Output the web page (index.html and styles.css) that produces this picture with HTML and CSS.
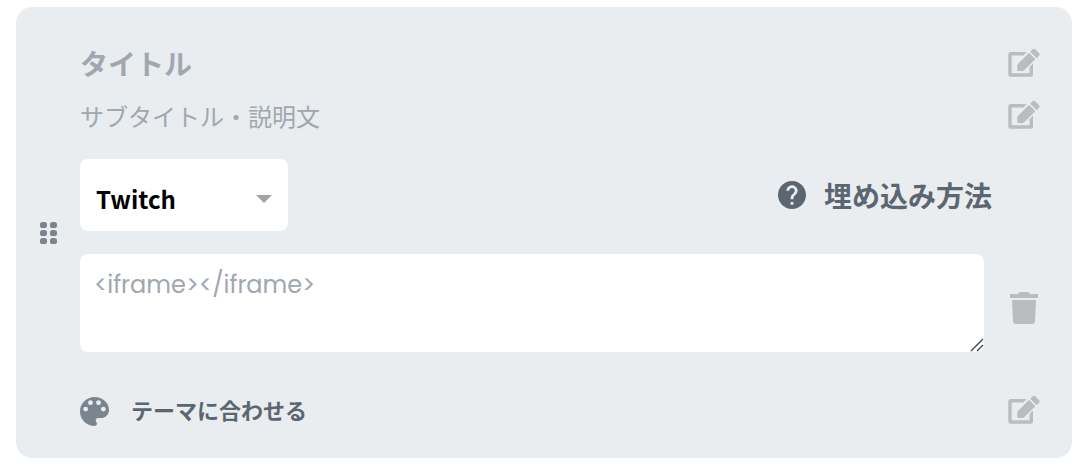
FILE: index.html
```html
<!DOCTYPE html>
<html lang="ja">

<head>
  <meta charset="UTF-8">
  <meta name="viewport" content="width=device-width, initial-scale=1.0">
  <title>埋め込み</title>
  <link rel="stylesheet" href="styles.css">
</head>

<body>
  <svg class="sprite" aria-hidden="true">
    <symbol id="icon-edit" viewBox="0 0 32 32">
      <path d="M18.7 4H2.8A2.5 2.5 0 0 0 .3 6.5v19.7a2.5 2.5 0 0 0 2.5 2.5h19.7a2.5 2.5 0 0 0 2.5-2.5V15.5l-3.4 3.4v5.7a.7.7 0 0 1-.7.7H4.4a.7.7 0 0 1-.7-.7V8.1a.7.7 0 0 1 .7-.7h10.9z" />
      <path d="M20.4 5.4q.7-.7 1.4 0l5 5q.7.7 0 1.4L16.2 22.3q-.6.6-1.5.6H10.300q-1 0-1-1v-4.400q0-.8.6-1.400zM22.7 3.300l1.700-1.700a2.200 2.200 0 0 1 3.100 0l3.400 3.400a2.200 2.200 0 0 1 0 3.100l-1.700 1.700q-.5.5-1 0l-5.500-5.500q-.5-.5 0-1z" />
    </symbol>
  </svg>

  <section class="card">
    <svg class="handle" viewBox="0 0 16 24">
      <rect x="0" y="1" width="7" height="6" rx="2.6" />
      <rect x="10" y="1" width="7" height="6" rx="2.6" />
      <rect x="0" y="9" width="7" height="6" rx="2.6" />
      <rect x="10" y="9" width="7" height="6" rx="2.6" />
      <rect x="0" y="17" width="7" height="6" rx="2.6" />
      <rect x="10" y="17" width="7" height="6" rx="2.6" />
    </svg>

    <div class="content">
      <div class="row">
        <input class="title" type="text" placeholder="タイトル" aria-label="タイトル">
        <button class="icon-btn" type="button" aria-label="タイトルを編集"><svg><use href="#icon-edit" /></svg></button>
      </div>
      <div class="row">
        <input class="subtitle" type="text" placeholder="サブタイトル・説明文" aria-label="サブタイトル・説明文">
        <button class="icon-btn" type="button" aria-label="説明文を編集"><svg><use href="#icon-edit" /></svg></button>
      </div>

      <div class="row service">
        <div class="select-wrap">
          <select aria-label="サービス">
            <option>Twitch</option>
            <option>YouTube</option>
          </select>
          <svg class="arrow" viewBox="0 0 16 8"><path d="M0 0h16L8 8z" /></svg>
        </div>
        <a class="help" href="#">
          <svg viewBox="2 2 20 20"><path d="M12 2C6.48 2 2 6.48 2 12s4.48 10 10 10 10-4.48 10-10S17.52 2 12 2zm1 17h-2v-2h2v2zm2.07-7.75l-.9.92C13.45 12.9 13 13.5 13 15h-2v-.5c0-1.1.45-2.1 1.17-2.83l1.24-1.26c.37-.36.59-.86.59-1.41 0-1.1-.9-2-2-2s-2 .9-2 2H8c0-2.21 1.79-4 4-4s4 1.79 4 4c0 .88-.36 1.68-.93 2.25z" /></svg>
          埋め込み方法
        </a>
      </div>

      <div class="row embed">
        <div class="code-wrap">
          <textarea placeholder="&lt;iframe&gt;&lt;/iframe&gt;" aria-label="埋め込みコード"></textarea>
          <svg class="grip" viewBox="0 0 14 14"><path d="M1 13L13 1M7 13l6-6" /></svg>
        </div>
        <button class="icon-btn trash" type="button" aria-label="削除">
          <svg viewBox="0 0 32 32"><path d="M2.8 2H10l.8-1.5q.3-.5 1-.5h8.4q.7 0 1 .5L22 2h7.2q.8 0 .8.8V6H2V2.8Q2 2 2.8 2zM4 8h24l-1 21.2q-.2 2.8-3 2.8H8q-2.8 0-3-2.8z" /></svg>
        </button>
      </div>

      <div class="row theme">
        <div class="theme-label">
          <svg viewBox="3 3 18 18"><path d="M12 3c-4.97 0-9 4.03-9 9s4.03 9 9 9c.83 0 1.5-.67 1.5-1.5 0-.39-.15-.74-.39-1.01-.23-.26-.38-.61-.38-.99 0-.83.67-1.5 1.5-1.5H16c2.76 0 5-2.24 5-5 0-4.42-4.03-8-9-8zM6.5 12a1.5 1.5 0 1 1 0-3 1.5 1.5 0 0 1 0 3zm3-4a1.5 1.5 0 1 1 0-3 1.5 1.5 0 0 1 0 3zm5 0a1.5 1.5 0 1 1 0-3 1.5 1.5 0 0 1 0 3zm3 4a1.5 1.5 0 1 1 0-3 1.5 1.5 0 0 1 0 3z" /></svg>
          <span>テーマに合わせる</span>
        </div>
        <button class="icon-btn" type="button" aria-label="テーマを編集"><svg><use href="#icon-edit" /></svg></button>
      </div>
    </div>
  </section>
</body>

</html>
```
FILE: styles.css
```css
* {
  box-sizing: border-box;
}

body {
  margin: 7px 16px;
  background-color: #fff;
  font-family: "Noto Sans CJK JP", sans-serif;
  color: #5c6670;
}

svg {
  display: block;
  fill: currentColor;
}

.sprite {
  position: absolute;
  width: 0;
  height: 0;
}

.card {
  display: flex;
  align-items: center;
  gap: 24px;
  padding: 0 32px 0 24px;
  background-color: #e9edf0;
  border-radius: 16px;
}

.handle {
  flex: none;
  width: 16px;
  height: 24px;
  overflow: visible;
  color: #7b838c;
}

.content {
  flex: 1;
  min-width: 0;
  padding: 31px 0 21px;
}

.row {
  display: flex;
  align-items: center;
  justify-content: space-between;
  gap: 24px;
  min-height: 52px;
}

input,
select,
textarea {
  border: none;
  outline: none;
  font-family: inherit;
  color: #000;
}

.title,
.subtitle {
  flex: 1;
  min-width: 0;
  height: 44px;
  padding: 0 0 2px;
  background: transparent;
}

.title {
  font-size: 28px;
  font-weight: 700;
}

.subtitle {
  font-size: 24px;
}

::placeholder {
  color: #a0a7af;
  opacity: 1;
}

.icon-btn {
  flex: none;
  padding: 0;
  border: none;
  background: none;
  color: #bbbcc0;
  cursor: pointer;
}

.icon-btn svg {
  width: 32px;
  height: 32px;
}

.service {
  margin-top: 17px;
  padding-right: 48px;
}

.select-wrap {
  position: relative;
}

select {
  display: block;
  width: 208px;
  height: 72px;
  padding: 6px 40px 0 16px;
  border-radius: 8px;
  background-color: #fff;
  font-size: 24px;
  font-weight: 700;
  appearance: none;
}

.arrow {
  position: absolute;
  top: 36px;
  right: 16px;
  width: 16px;
  height: 8px;
  color: #9fa2a7;
  pointer-events: none;
}

.help {
  display: flex;
  align-items: center;
  gap: 18px;
  color: inherit;
  font-size: 28px;
  font-weight: 700;
  text-decoration: none;
}

.help svg {
  width: 28px;
  height: 28px;
}

.embed {
  margin-top: 23px;
}

.code-wrap {
  position: relative;
  flex: 1;
}

textarea {
  display: block;
  width: 100%;
  height: 98px;
  padding: 12px 14px;
  border-radius: 8px;
  font-family: Poppins, Inter, sans-serif;
  font-size: 24px;
  line-height: 38px;
  resize: none;
}

.grip {
  position: absolute;
  right: 0;
  bottom: 0;
  width: 14px;
  height: 14px;
  fill: none;
  stroke: #444;
  stroke-width: 1.4;
  pointer-events: none;
}

.trash {
  padding-top: 10px;
}

.theme {
  margin-top: 33px;
}

.theme-label {
  display: flex;
  align-items: center;
  gap: 22px;
  font-size: 22px;
  font-weight: 700;
}

.theme-label svg {
  width: 29px;
  height: 29px;
  color: #7b858f;
}

.theme-label span {
  padding-bottom: 4px;
}
```
